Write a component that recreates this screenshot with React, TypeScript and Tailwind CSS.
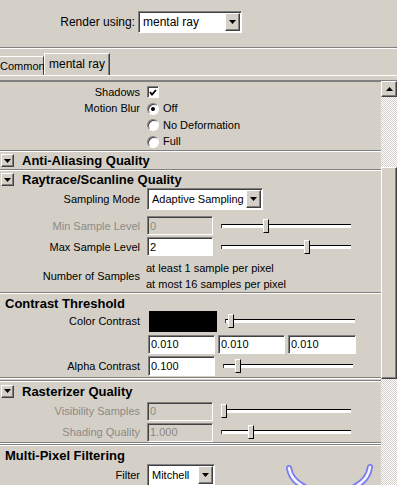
import React from "react";

const BG = "bg-[#d4d0c8]";

const Tri = ({ up = false }: { up?: boolean }) => (
  <svg width="7" height="4" viewBox="0 0 7 4">
    <polygon points={up ? "0,4 7,4 3.5,0" : "0,0 7,0 3.5,4"} fill="#000" />
  </svg>
);

// raised windows-classic button
const Raised = ({ className = "", children }: { className?: string; children?: React.ReactNode }) => (
  <div
    className={`flex items-center justify-center bg-[#d4d0c8] border border-t-white border-l-white border-b-[#404040] border-r-[#404040] shadow-[inset_-1px_-1px_0_#808080] ${className}`}
  >
    {children}
  </div>
);

const Label = ({ children, dim = false }: { children: React.ReactNode; dim?: boolean }) => (
  <span className={`w-[140px] shrink-0 text-right mr-[7px] ${dim ? "text-[#8c8a85]" : "text-black"}`}>{children}</span>
);

const Field = ({ value, disabled = false, className = "w-[66px] h-[19px]" }: { value: string; disabled?: boolean; className?: string }) => (
  <div
    className={`${className} flex items-center pl-[2px] border border-t-[#808080] border-l-[#808080] border-b-white border-r-white shadow-[inset_1px_1px_0_#404040] ${disabled ? "bg-[#d4d0c8] text-[#8c8a85]" : "bg-white text-black"}`}
  >
    {value}
  </div>
);

const Dropdown = ({ value, className }: { value: string; className: string }) => (
  <div
    className={`${className} flex items-center bg-white border border-t-[#808080] border-l-[#808080] border-b-white border-r-white shadow-[inset_1px_1px_0_#404040] pr-[1px]`}
  >
    <span className="flex-1 pl-[4px] text-black whitespace-nowrap overflow-hidden">{value}</span>
    <Raised className="w-[15px] h-[18px]">
      <Tri />
    </Raised>
  </div>
);

const Slider = ({ pos }: { pos: number }) => (
  <div className="relative w-[130px] h-[14px] ml-[8px]">
    <div className="absolute left-0 right-0 top-[5px] h-[4px] bg-white border-t border-l border-t-black border-l-[#404040]" />
    <div
      className="absolute top-0 w-[6px] h-[14px] bg-[#d4d0c8] border border-t-white border-l-white border-b-black border-r-black"
      style={{ left: pos }}
    />
  </div>
);

const Sep = () => <div className="h-[2px] border-t border-t-[#808080] border-b border-b-white" />;

const SectionHead = ({ title, expand = true }: { title: string; expand?: boolean }) => (
  <div className="flex items-center h-[17px]">
    {expand ? (
      <Raised className="w-[13px] h-[13px] ml-[1px] mr-[8px]">
        <Tri />
      </Raised>
    ) : (
      <span className="w-[5px]" />
    )}
    <span className="font-bold text-[13px] text-black">{title}</span>
  </div>
);

const Radio = ({ on = false, label }: { on?: boolean; label: string }) => (
  <div className="flex items-center h-[17px]">
    <span className="w-[147px]" />
    <span className="w-[12px] h-[12px] rounded-full bg-white border border-t-[#808080] border-l-[#808080] border-b-white border-r-white shadow-[inset_1px_1px_0_#404040] flex items-center justify-center">
      {on && <span className="w-[4px] h-[4px] rounded-full bg-black" />}
    </span>
    <span className="ml-[4px]">{label}</span>
  </div>
);

export default function App() {
  return (
    <div className={`w-[397px] h-[485px] overflow-hidden ${BG} text-[11px] text-black font-['Liberation_Sans',sans-serif] relative`}>
      {/* Renderer picker */}
      <div className="flex items-center h-[47px] pb-[4px]">
        <span className="w-[135px] text-right mr-[3px] text-[12px]">Render using:</span>
        <Dropdown value="mental ray" className="w-[104px] h-[22px] text-[12px]" />
      </div>
      <Sep />

      {/* Tabs */}
      <div className="flex items-end h-[27px] border-b border-b-white">
        <div className="w-[44px] h-[19px] flex items-center justify-start whitespace-nowrap border-t border-r border-t-white border-r-[#404040]">
          Common
        </div>
        <div className="w-[66px] h-[22px] flex items-center justify-center border-t border-l border-r border-t-white border-l-white border-r-[#404040] shadow-[inset_-1px_0_0_#808080] pb-[2px] text-[12px]">
          mental ray
        </div>
      </div>
      <div className="h-[5px] border-b border-b-[#808080]" />

      <div className="flex h-[405px]">
        {/* Scroll content */}
        <div className="w-[381px] flex flex-col overflow-hidden border-t border-t-[#808080]">
          <div className="h-[4px]" />
          <div className="flex items-center h-[16px]">
            <Label>Shadows</Label>
            <span className="w-[12px] h-[12px] bg-white border border-t-[#808080] border-l-[#808080] border-b-white border-r-white shadow-[inset_1px_1px_0_#404040] flex items-center justify-center">
              <svg width="8" height="7" viewBox="0 0 8 7">
                <polyline points="1,3 3,5.5 7,1" fill="none" stroke="#000" strokeWidth="1.8" />
              </svg>
            </span>
          </div>
          <div className="flex items-center h-[17px]">
            <Label>Motion Blur</Label>
            <span className="w-[12px] h-[12px] rounded-full bg-white border border-t-[#808080] border-l-[#808080] border-b-white border-r-white shadow-[inset_1px_1px_0_#404040] flex items-center justify-center">
              <span className="w-[4px] h-[4px] rounded-full bg-black" />
            </span>
            <span className="ml-[4px]">Off</span>
          </div>
          <Radio label="No Deformation" />
          <Radio label="Full" />
          <Sep />
          <div className="h-[1px]" />
          <SectionHead title="Anti-Aliasing Quality" />
          <Sep />
          <SectionHead title="Raytrace/Scanline Quality" />

          <div className="flex items-center h-[24px]">
            <Label>Sampling Mode</Label>
            <Dropdown value="Adaptive Sampling" className="w-[116px] h-[22px]" />
          </div>
          <div className="flex items-center h-[20px] mt-[6px]">
            <Label dim>Min Sample Level</Label>
            <Field value="0" disabled />
            <Slider pos={42} />
          </div>
          <div className="flex items-center h-[20px] mt-[2px]">
            <Label>Max Sample Level</Label>
            <Field value="2" />
            <Slider pos={83} />
          </div>
          <div className="flex items-center h-[32px] mt-[4px]">
            <Label>Number of Samples</Label>
            <div className="flex flex-col leading-[16px] -ml-[1px]">
              <span>at least 1 sample per pixel</span>
              <span>at most 16 samples per pixel</span>
            </div>
          </div>
          <Sep />
          <div className="h-[1px]" />
          <SectionHead title="Contrast Threshold" expand={false} />
          <div className="flex items-center h-[21px] mt-[-1px]">
            <Label>Color Contrast</Label>
            <div className="w-[68px] h-[21px] bg-black ml-[2px]" />
            <Slider pos={3} />
          </div>
          <div className="flex items-center h-[19px] mt-[3px]">
            <span className="w-[148px]" />
            <Field value="0.010" className="w-[67px] h-[19px] mr-[3px]" />
            <Field value="0.010" className="w-[67px] h-[19px] mr-[3px]" />
            <Field value="0.010" className="w-[68px] h-[19px]" />
          </div>
          <div className="flex items-center h-[20px] mt-[2px]">
            <Label>Alpha Contrast</Label>
            <Field value="0.100" className="w-[67px] h-[20px] ml-[1px]" />
            <Slider pos={12} />
          </div>
          <div className="h-[2px]" />
          <Sep />
          <div className="h-[1px]" />
          <Sep />
          <div className="h-[2px]" />
          <SectionHead title="Rasterizer Quality" />
          <div className="flex items-center h-[19px] mt-[2px]">
            <Label dim>Visibility Samples</Label>
            <Field value="0" disabled />
            <Slider pos={0} />
          </div>
          <div className="flex items-center h-[19px] mt-[2px]">
            <Label dim>Shading Quality</Label>
            <Field value="1.000" disabled />
            <Slider pos={27} />
          </div>
          <Sep />
          <div className="h-[1px]" />
          <Sep />
          <div className="h-[1px]" />
          <SectionHead title="Multi-Pixel Filtering" expand={false} />
          <div className="flex items-center h-[22px]">
            <Label>Filter</Label>
            <Dropdown value="Mitchell" className="w-[68px] h-[22px]" />
          </div>
        </div>

        {/* Scrollbar */}
        <div className="w-[16px] flex flex-col bg-[repeating-conic-gradient(#ffffff_0_25%,#d4d0c8_0_50%)] bg-[length:2px_2px]">
          <Raised className="w-[16px] h-[16px]">
            <Tri up />
          </Raised>
          <div className="h-[70px]" />
          <Raised className="w-[16px] h-[212px]" />
        </div>
      </div>

      {/* cursor overlay */}
      <svg className="absolute left-[282px] top-[462px]" width="95" height="23" viewBox="0 0 95 23">
        <path d="M7 6 Q9 20 27 27" fill="none" stroke="#7a7af0" strokeWidth="6" strokeLinecap="round" />
        <path d="M88 5 Q86 20 68 27" fill="none" stroke="#7a7af0" strokeWidth="6" strokeLinecap="round" />
        <path d="M7 6 Q9 20 27 27" fill="none" stroke="#f4f4ff" strokeWidth="2.5" strokeLinecap="round" />
        <path d="M88 5 Q86 20 68 27" fill="none" stroke="#f4f4ff" strokeWidth="2.5" strokeLinecap="round" />
      </svg>
    </div>
  );
}
